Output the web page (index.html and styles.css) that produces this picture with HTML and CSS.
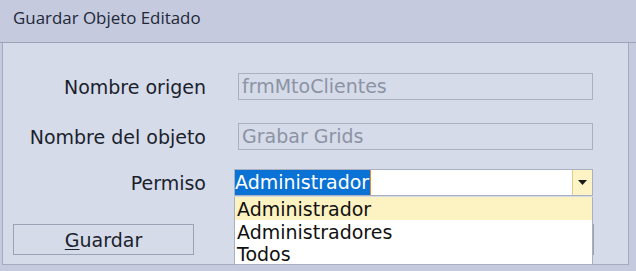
FILE: index.html
```html
<!DOCTYPE html>
<html lang="es">
<head>
    <meta charset="UTF-8">
    <title>Guardar Objeto Editado</title>
    <link rel="stylesheet" href="styles.css">
</head>
<body>
    <div class="window">
        <div class="title-bar">Guardar Objeto Editado</div>

        <div class="panel">
            <div class="form-row row-origen">
                <label class="form-label">Nombre origen</label>
                <div class="text-field">frmMtoClientes</div>
            </div>

            <div class="form-row row-objeto">
                <label class="form-label">Nombre del objeto</label>
                <div class="text-field">Grabar Grids</div>
            </div>

            <div class="form-row row-permiso">
                <label class="form-label">Permiso</label>
                <div class="combo">
                    <div class="combo-value">
                        <span class="combo-selection">Administrador</span><span class="caret"></span>
                    </div>
                    <div class="combo-arrow">
                        <svg width="9" height="5" viewBox="0 0 9 5">
                            <path d="M0 0h9L4.5 5z" fill="#1b1b1b"/>
                        </svg>
                    </div>

                    <!-- open popup of the combo -->
                    <ul class="combo-list">
                        <li class="combo-item active">Administrador</li>
                        <li class="combo-item">Administradores</li>
                        <li class="combo-item">Todos</li>
                    </ul>
                </div>
            </div>

            <div class="button-row">
                <button class="dialog-button"><u>G</u>uardar</button>
                <button class="dialog-button"><u>C</u>ancelar</button>
            </div>
        </div>
    </div>
</body>
</html>
```

FILE: styles.css
```css
* {
    margin: 0;
    padding: 0;
    box-sizing: border-box;
}

body {
    width: 636px;
    height: 271px;
    overflow: hidden;
    background-color: #c5cadf;
    font-family: "DejaVu Sans", sans-serif;
    font-size: 19px;
    color: #1b1f2e;
}

.window {
    height: 100%;
    display: flex;
    flex-direction: column;
}

.title-bar {
    height: 43px;
    padding: 5px 0 0 13px;
    font-family: "Open Sans", "Noto Sans", sans-serif;
    font-size: 16.9px;
    line-height: 26px;
    color: #222838;
    border-bottom: 1px solid #9ba3b9;
}

.panel {
    position: relative;
    margin-left: 2px;
    width: 627px;
    height: 222px;
    background-color: #d5dbe8;
    border-left: 1px solid #a3abbf;
    border-right: 1px solid #a3abbf;
    border-bottom: 1px solid #a3abbf;
    padding-top: 30px;
}

.form-row {
    display: flex;
    align-items: center;
    height: 27px;
}

.row-objeto {
    margin-top: 23px;
}

.row-permiso {
    margin-top: 19px;
}

.form-label {
    width: 203px;
    text-align: right;
    flex-shrink: 0;
}

.text-field {
    margin-left: 32px;
    width: 355px;
    height: 27px;
    border: 1px solid #a9b0c0;
    padding-left: 3px;
    line-height: 25px;
    color: #8c93a5;
}

.combo {
    position: relative;
    margin-left: 28px;
    width: 359px;
    height: 27px;
    display: flex;
    background-color: #fff;
    border: 1px solid #a9b0c0;
}

.combo-value {
    flex: 1;
    display: flex;
    align-items: stretch;
    line-height: 25px;
}

.combo-selection {
    background-color: #0a72d4;
    color: #fff;
    padding-right: 1px;
}

.caret {
    width: 1px;
    background-color: #f08a24;
}

.combo-arrow {
    width: 20px;
    background-color: #fdf3c4;
    border-left: 1px solid #e2c98a;
    display: flex;
    align-items: center;
    justify-content: center;
}

.combo-list {
    position: absolute;
    top: 27px;
    left: -1px;
    width: 359px;
    list-style: none;
    background-color: #fff;
    border: 1px solid #a9b0c0;
    border-top: none;
    color: #111;
    z-index: 5;
}

.combo-item {
    height: 22px;
    line-height: 24px;
    padding-left: 2px;
}

.combo-item.active {
    height: 23px;
    background-color: #fdf2c1;
}

.button-row {
    display: flex;
    justify-content: space-between;
    margin: 28px 0 0 10px;
    width: 581px;
}

.dialog-button {
    width: 181px;
    height: 31px;
    background-color: #d5dbe8;
    border: 1px solid #9aa2b6;
    font-family: inherit;
    font-size: inherit;
    color: #1b1f2e;
}

.dialog-button u {
    text-decoration-thickness: 1px;
    text-underline-offset: 2px;
}
```
